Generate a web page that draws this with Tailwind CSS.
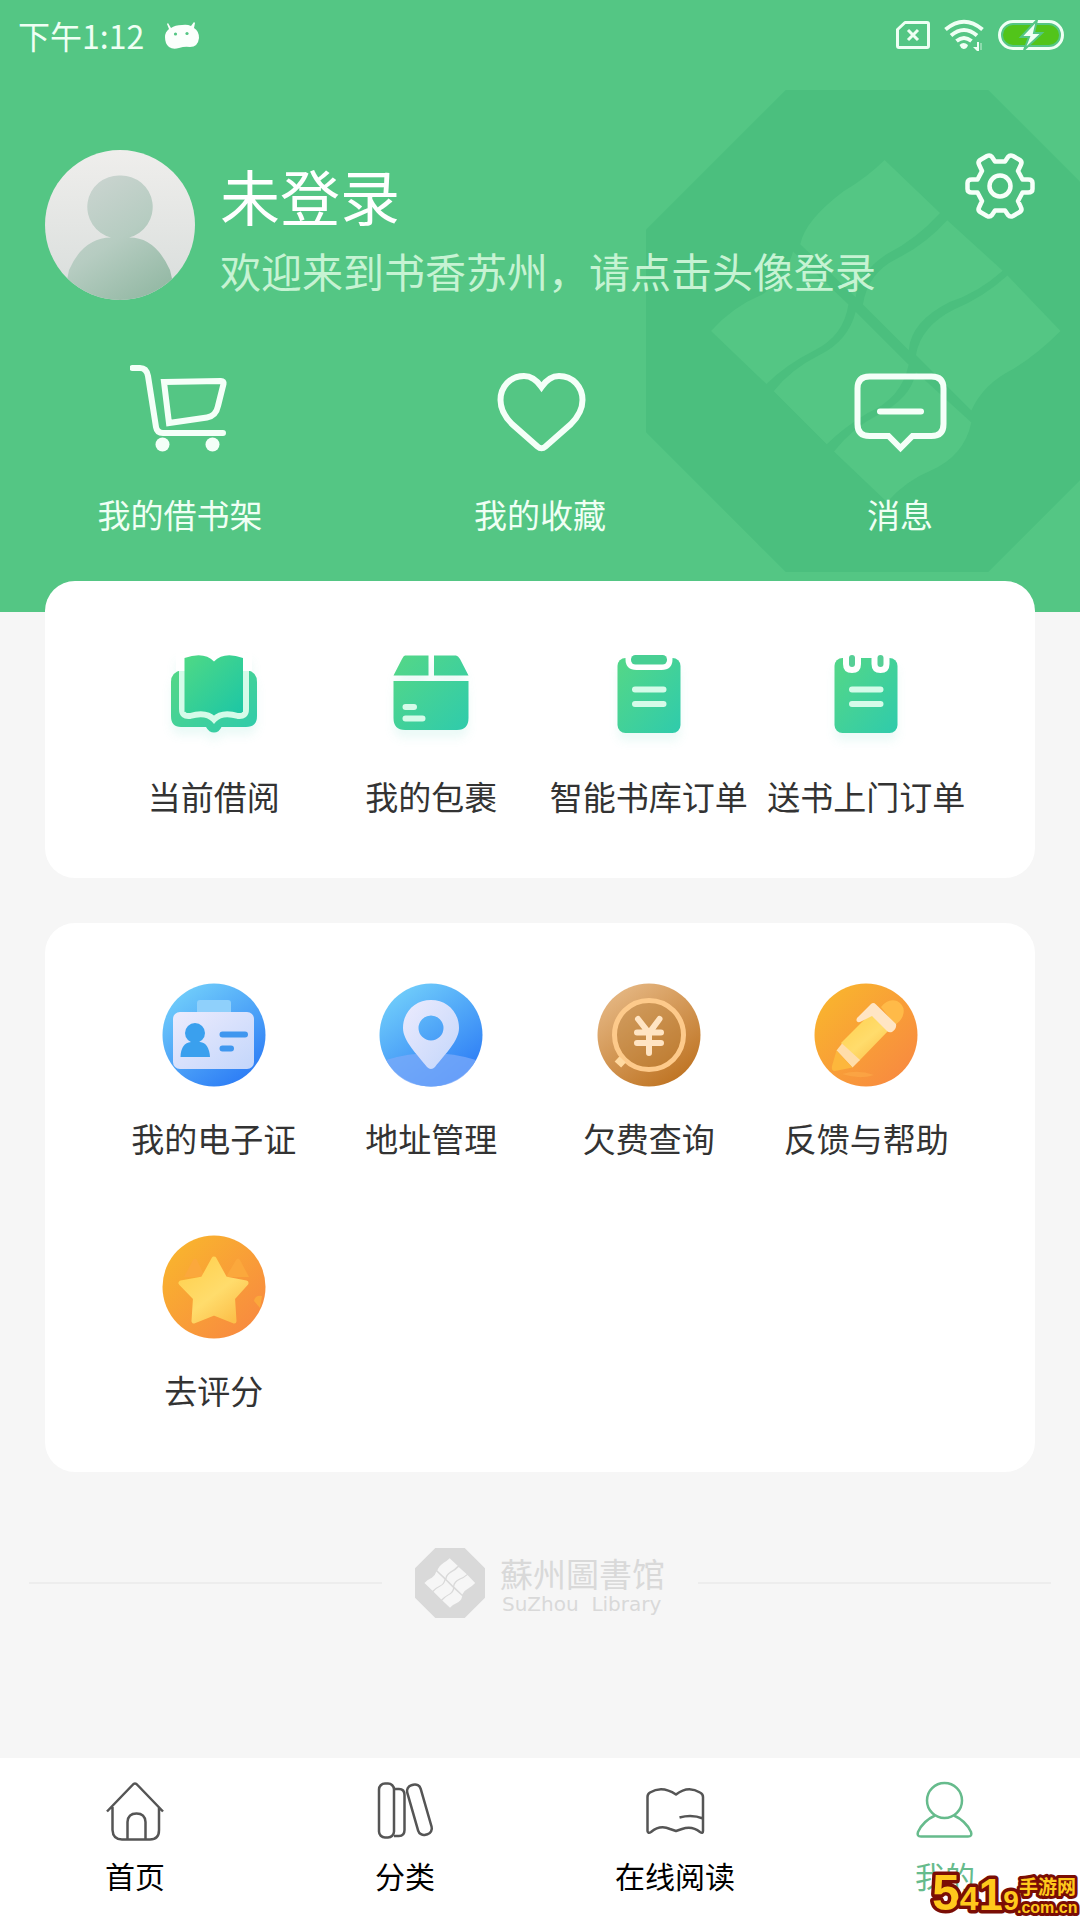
<!DOCTYPE html>
<html lang="zh-CN">
<head>
<meta charset="utf-8">
<meta name="viewport" content="width=device-width, initial-scale=1">
<title>书香苏州 - 我的</title>
<script src="https://cdn.jsdelivr.net/npm/@tailwindcss/browser@4"></script>
</head>
<body class="relative flex min-h-screen flex-col bg-[#f6f6f6] font-['Noto_Sans_CJK_SC',sans-serif] text-[#333]">

<!-- Shared gradients and the library emblem -->
<svg class="absolute size-0" aria-hidden="true">
  <defs>
    <linearGradient id="green" x1="0" y1="0" x2="1" y2="1"><stop offset=".1" stop-color="#51d68a"/><stop offset="1" stop-color="#2fcbac"/></linearGradient>
    <linearGradient id="page" x1="0" y1="0" x2="1" y2="1"><stop offset="0" stop-color="#4fd985"/><stop offset="1" stop-color="#1cc6a6"/></linearGradient>
    <linearGradient id="blue" x1=".1" y1="0" x2=".8" y2="1"><stop offset="0" stop-color="#76d4fb"/><stop offset="1" stop-color="#2a79f5"/></linearGradient>
    <linearGradient id="paper" x1="0" y1="0" x2="1" y2="1"><stop offset="0" stop-color="#ecebfd"/><stop offset="1" stop-color="#c3d6fb"/></linearGradient>
    <linearGradient id="bronze" x1=".1" y1="0" x2=".8" y2="1"><stop offset="0" stop-color="#e8bc8a"/><stop offset="1" stop-color="#bd711f"/></linearGradient>
    <linearGradient id="orange" x1=".1" y1=".1" x2=".9" y2=".9"><stop offset="0" stop-color="#f9b42e"/><stop offset="1" stop-color="#f88a40"/></linearGradient>
    <linearGradient id="gold" x1="0" y1="0" x2=".8" y2="1"><stop offset="0" stop-color="#ffcf4a"/><stop offset=".6" stop-color="#ffdc6c"/><stop offset="1" stop-color="#fcc04a"/></linearGradient>
    <linearGradient id="disc" x1="0" y1="0" x2="0" y2="1"><stop offset="0" stop-color="#efeeec"/><stop offset="1" stop-color="#d8dddb"/></linearGradient>
    <linearGradient id="person" x1=".2" y1="0" x2=".8" y2="1"><stop offset="0" stop-color="#ccd5d1"/><stop offset=".5" stop-color="#b6ccc1"/><stop offset="1" stop-color="#92b8a3"/></linearGradient>
    <symbol id="emblem" viewBox="0 0 100 100">
      <path fill="currentColor" fill-rule="evenodd" d="M29 0H71L100 29V71L71 100H29L0 71V29Z
        M32 32Q33 27 41 21Q46 18 49.500 14.500L61 25.500Q56 31 50 34Q44 38 43.500 43Z
        M62.500 27L74 37.500Q69 42 63 44Q55 48 54.500 54L45 44.500Q46 38 52 35Q58 32 62.500 27Z
        M75 38.500L86 50Q81 55 76 58Q70 61 67.500 66.500L56 55Q57 49 64 45.500Q70 43 75 38.500Z
        M30.500 33.500L42 44.500Q41 51 35 54Q29 57 25 61L13.500 50Q18 45 24 42.500Q29 39 30.500 33.500Z
        M43.500 46L54.500 57Q53 64 46 67Q41 70 37.500 73.500L26.500 62.500Q30 58 36 55Q42 52 43.500 46Z
        M56 58.500L67.500 69Q66 76 59 79Q54 81 50 85.500L39 75Q43 70 48 67.500Q55 64 56 58.500Z"/>
    </symbol>
  </defs>
</svg>

<header class="relative overflow-hidden bg-[#54c684] pb-[73px] text-white">
  <svg class="absolute top-[90px] -right-12 size-[482px] text-[#4bbf7e]" aria-hidden="true"><use href="#emblem"/></svg>

  <div class="relative flex h-[74px] items-center pr-4 pb-1 pl-[18px] text-[#effff4]">
    <time class="text-[32px] leading-[70px]">下午1:12</time>
    <svg class="ml-[21px] h-[27px] w-[34px]" viewBox="0 0 34 27" fill="#fbfffc" aria-hidden="true">
      <path d="M3 1L6 6Q10 3 17 3Q22 2 26 4L29 0L30 1L29 6Q34 9 34 16Q33 25 25 25Q20 24 14 26Q8 28 4 25Q0 22 0 15Q0 10 4 7L2 2Z"/>
      <g fill="#54c684"><circle cx="10.500" cy="12" r="1.600"/><circle cx="22" cy="11.500" r="1.600"/></g>
    </svg>
    <svg class="ml-auto h-7 w-[34px]" viewBox="0 0 34 28" fill="none" stroke="currentColor" stroke-width="3" stroke-linejoin="round" aria-hidden="true">
      <path d="M9 1.500H31Q32.500 1.500 32.500 3V25Q32.500 26.500 31 26.500H3Q1.500 26.500 1.500 25V8.500Z"/><path d="M12 9L22 19M22 9L12 19"/>
    </svg>
    <svg class="ml-3.5 h-8 w-10" viewBox="0 0 40 32" fill="none" stroke="currentColor" stroke-width="4" aria-hidden="true">
      <path d="M1.500 10.500Q20-5 38.500 10.500M7 16.500Q20 5.500 33 16.500M12.500 22Q20 16 27.500 22"/><path fill="currentColor" stroke="none" d="M15.500 26Q19.500 22 24 26Q23 30 19.500 30Q16.500 29 15.500 26ZM33 23H35V32H33L29 28H33Z"/><path stroke-width="1.500" opacity=".5" d="M37 24V31"/>
    </svg>
    <svg class="ml-3.5 h-[30px] w-[66px]" viewBox="0 0 66 30" aria-hidden="true">
      <rect x="1.500" y="1.500" width="63" height="27" rx="13.500" fill="none" stroke="currentColor" stroke-width="3"/><rect x="5" y="5" width="56" height="20" rx="10" fill="#52c41a"/><path d="M39 0L23 17H31L26 30L44 13H36Z" fill="currentColor" stroke="#54c684" stroke-width="2"/>
    </svg>
  </div>

  <div class="relative mt-[76px] flex items-start px-[45px]">
    <a href="#login" aria-label="登录" class="shrink-0">
      <svg class="size-[150px]" viewBox="0 0 150 150" aria-hidden="true">
        <clipPath id="round"><circle cx="75" cy="75" r="75"/></clipPath>
        <circle cx="75" cy="75" r="75" fill="url(#disc)"/>
        <g clip-path="url(#round)"><path fill="url(#person)" d="M75 25.500A31.500 31.500 0 0 1 84 87.500Q110 87 125 120L132 150H18L24 120Q38 88 66 87.500A31.500 31.500 0 0 1 75 25.500Z"/></g>
      </svg>
    </a>
    <div class="pt-2.5 pl-[25px]">
      <h1 class="text-[60px] leading-[70px]">未登录</h1>
      <p class="mt-2.5 text-[41px] leading-[60px] text-[#c6f3d3]">欢迎来到书香苏州，请点击头像登录</p>
    </div>
    <button type="button" aria-label="设置" class="ml-auto">
      <svg class="mt-0.5 size-[70px]" viewBox="0 0 70 70" fill="none" stroke="#f6fff9" stroke-width="4.500" stroke-linejoin="round" aria-hidden="true">
        <path d="M30 9.500H40L43 5Q45 2.500 48 4L54 7.500Q57.500 9.500 56 12.500L53 19L57.500 27.500H63Q67.500 27.500 67.500 31V37Q67.500 40.500 63 40.500H57.500L53 49L56 55.500Q57.500 58.500 54 60.500L48 64Q45 65.500 43 63L40 58.500H30L27 63Q25 65.500 22 64L16 60.500Q12.500 58.500 14 55.500L17 49L12.500 40.500H7Q2.500 40.500 2.500 37V31Q2.500 27.500 7 27.500H12.500L17 19L14 12.500Q12.500 9.500 16 7.500L22 4Q25 2.500 27 5Z"/><circle cx="35" cy="34" r="10.500"/>
      </svg>
    </button>
  </div>

  <nav aria-label="我的内容" class="relative mt-[61px] grid grid-cols-3 text-[33px] leading-[50px] text-[#effff4]">
    <a href="#shelf" class="flex flex-col items-center gap-7">
      <svg class="size-[100px]" viewBox="0 0 100 100" fill="none" stroke="#f4fff8" stroke-width="6" stroke-linecap="round" aria-hidden="true">
        <path d="M2.500 7H10Q16.500 7 18 15L26 66Q27 72 33 72H93"/><path d="M34 21L91 20Q94 20 93.500 23L88 45Q86 55 77 56.500L39 62Z"/><g fill="#f4fff8" stroke="none"><circle cx="32.500" cy="83.500" r="7"/><circle cx="82.500" cy="83.500" r="7"/></g>
      </svg>我的借书架</a>
    <a href="#favorites" class="flex flex-col items-center gap-7">
      <svg class="size-[100px]" viewBox="0 0 100 100" fill="none" stroke="#f4fff8" stroke-width="6" aria-hidden="true">
        <path d="M51.500 26C46 18 40 15 34 15C20 15 10.500 26 10.500 39C10.500 50 16 57 22 63L47.500 85.500Q51.500 89 55.500 85.500L81 63C87 57 92.500 50 92.500 39C92.500 26 83 15 69 15C63 15 57 18 51.500 26Z"/>
      </svg>我的收藏</a>
    <a href="#messages" class="flex flex-col items-center gap-7">
      <svg class="size-[100px]" viewBox="0 0 100 100" fill="none" stroke="#f4fff8" stroke-width="6" stroke-linecap="round" aria-hidden="true">
        <path d="M19.500 15.500H81.500Q93.500 15.500 93.500 27.500V63Q93.500 75 81.500 75H62.500L50.500 87L38.500 75H19.500Q7.500 75 7.500 63V27.500Q7.500 15.500 19.500 15.500Z"/><path d="M30 50.500H71"/>
      </svg>消息</a>
  </nav>
</header>

<main class="relative -mt-[31px] flex flex-1 flex-col px-[45px] text-[33px] leading-[50px]">
  <section aria-label="借阅服务" class="grid grid-cols-4 rounded-[30px] bg-white px-[60px] pt-[60px] pb-[57px]">
    <a href="#current" class="flex flex-col items-center gap-[26px] whitespace-nowrap">
      <svg class="size-[104px] drop-shadow-[0_8px_5px_#2fcbac18]" viewBox="0 0 104 104" aria-hidden="true">
        <path fill="url(#green)" d="M20 29H85Q95 31 95 41V75Q95 86 84 86H59.500Q57 91.500 52 91.500Q47 91.500 44 86H19Q9 86 9 75V41Q9 31 20 29Z"/>
        <path fill="#fff" d="M17 27H86V34H17Z"/>
        <path fill="url(#page)" stroke="#d5fbe9" stroke-width="6" d="M20 24V68Q20 76 28 75Q44 70 52 78.500Q60 70 76 75Q84 76 84 68V24"/>
        <path fill="#fff" d="M14 12H90V30H14Z"/>
        <path fill="url(#page)" d="M22.500 17Q42 10 52 20.500Q62 10 81 17V71Q62 66 52 73Q42 66 22.500 71Z"/>
      </svg>当前借阅</a>
    <a href="#packages" class="flex flex-col items-center gap-[26px] whitespace-nowrap">
      <svg class="size-[104px] drop-shadow-[0_8px_5px_#2fcbac18]" viewBox="0 0 104 104" aria-hidden="true">
        <path fill="url(#green)" d="M26 14.500H49.500V34.500H14.500L23 18Q24.500 14.500 26 14.500ZM55 14.500H77Q79 14.500 81 18L89.500 34.500H55ZM14.500 40H89.500V77Q89.500 89 78 89H26Q14.500 89 14.500 77Z"/><path stroke="#d5fbe9" stroke-width="6" stroke-linecap="round" d="M26.500 66H35M26.500 77.500H43.500"/>
      </svg>我的包裹</a>
    <a href="#smart-orders" class="flex flex-col items-center gap-[26px] whitespace-nowrap">
      <svg class="size-[104px] drop-shadow-[0_8px_5px_#2fcbac18]" viewBox="0 0 104 104" aria-hidden="true">
        <rect x="20.500" y="17" width="63" height="75" rx="8" fill="url(#green)"/><path fill="#fff" d="M28.500 12H75.500V18Q75.500 29 64.500 29H39.500Q28.500 29 28.500 18Z"/><rect x="34" y="14" width="36" height="9.500" rx="4.500" fill="#48cf93"/><path stroke="#d5fbe9" stroke-width="6" stroke-linecap="round" d="M38 48.500H66.500M38 63H66.500"/>
      </svg>智能书库订单</a>
    <a href="#door-orders" class="flex flex-col items-center gap-[26px] whitespace-nowrap">
      <svg class="size-[104px] drop-shadow-[0_8px_5px_#2fcbac18]" viewBox="0 0 104 104" aria-hidden="true">
        <rect x="20.500" y="17" width="63" height="75" rx="8" fill="url(#green)"/><path fill="#fff" d="M29 12H47V23Q47 32 38 32Q29 32 29 23ZM57.500 12H75.500V23Q75.500 32 66.500 32Q57.500 32 57.500 23Z"/><g fill="#56cf96"><rect x="35" y="14" width="6" height="12" rx="3"/><rect x="63.500" y="14" width="6" height="12" rx="3"/></g><path stroke="#d5fbe9" stroke-width="6" stroke-linecap="round" d="M38 48.500H66.500M38 63H66.500"/>
      </svg>送书上门订单</a>
  </section>

  <section aria-label="更多服务" class="mt-[45px] grid grid-cols-4 gap-y-[72px] rounded-[30px] bg-white px-[60px] pt-[60px] pb-[57px]">
    <a href="#card" class="flex flex-col items-center gap-[26px] whitespace-nowrap">
      <svg class="size-[104px]" viewBox="0 0 104 104" aria-hidden="true">
        <circle cx="52" cy="52" r="51.500" fill="url(#blue)"/><rect x="35" y="17" width="34" height="16" rx="3" fill="#8fd0fb"/><rect x="11" y="29" width="81" height="57" rx="7" fill="url(#paper)"/><g fill="#3aa0ee"><circle cx="33" cy="50" r="10"/><path d="M18.500 74Q19 60 29 59H38Q47 60 48 74Z"/></g><path stroke="#3f97ef" stroke-width="6" stroke-linecap="round" d="M60.500 51.500H83M60.500 65.500H69"/>
      </svg>我的电子证</a>
    <a href="#address" class="flex flex-col items-center gap-[26px] whitespace-nowrap">
      <svg class="size-[104px]" viewBox="0 0 104 104" aria-hidden="true">
        <circle cx="52" cy="52" r="51.500" fill="url(#blue)"/><path fill="#7ba9fa" fill-opacity=".75" d="M7 77Q52 63 97 77Q83 103.500 52 103.500Q21 103.500 7 77Z"/><path fill="url(#paper)" fill-rule="evenodd" d="M52 17C68 17 80 29 80 45C80 58 66 71 56 84Q52 88 48 84C38 71 24 58 24 45C24 29 36 17 52 17ZM52 32.500A12.500 12.500 0 1 0 52 57.500A12.500 12.500 0 1 0 52 32.500Z"/>
      </svg>地址管理</a>
    <a href="#fees" class="flex flex-col items-center gap-[26px] whitespace-nowrap">
      <svg class="size-[104px]" viewBox="0 0 104 104" fill="none" stroke-linecap="round" aria-hidden="true">
        <circle cx="52" cy="52" r="51.500" fill="url(#bronze)"/><circle cx="52" cy="52" r="34.500" fill="#b57a35" fill-opacity=".35" stroke="#fdca8b" stroke-width="5"/><path stroke="#ffe4c3" stroke-width="6" d="M41 36L52 50L62.500 36M52 50V70M40 49.500H64M40 60H64"/><path stroke="#ffd9a0" stroke-width="7" stroke-linecap="butt" d="M20 76L26.500 82"/>
      </svg>欠费查询</a>
    <a href="#help" class="flex flex-col items-center gap-[26px] whitespace-nowrap">
      <svg class="size-[104px]" viewBox="0 0 104 104" aria-hidden="true">
        <circle cx="52" cy="52" r="51.500" fill="url(#orange)"/><path fill="#ffba48" d="M67 24Q74 15 83 18Q92 23 89 32Q88 37 81 42Z"/><path fill="url(#gold)" d="M58 29L75 47L45 78L27 60Z"/><path fill="#ffe5c4" d="M57 21Q59.500 19 62 21.500L82 41Q83 46 78 49Q75 50 73 48L58 33L46 39Q41 40 43 35Z"/><path fill="#ffdda9" d="M28 60.500L46 77L38.500 84.500L22.500 67.500Z"/><path fill="#fdb73c" d="M22.500 67.500L38.500 84.500L21 88Q17 88 18 83Z"/><path fill="#fdaf4c" fill-opacity=".5" d="M28 91Q44 86 60 92Q45 97 28 91Z"/>
      </svg>反馈与帮助</a>
    <a href="#rate" class="flex flex-col items-center gap-[26px] whitespace-nowrap">
      <svg class="size-[104px]" viewBox="0 0 104 104" aria-hidden="true">
        <circle cx="52" cy="52" r="51.500" fill="url(#orange)"/><path fill="#fba83c" d="M31 25Q33 22 35 25L43 42H22ZM74 25Q76 22 78 25L87 42H64ZM92 66Q93 60 100 61L98 73Z"/><path fill="url(#gold)" stroke="url(#gold)" stroke-width="5" stroke-linejoin="round" d="M52 24L63 44L84 48L70.500 63L72 86L52 78L32 86L33.500 63L19 48L41 44Z"/>
      </svg>去评分</a>
  </section>

  <footer class="-mx-4 mt-[76px] flex items-center pb-[130px] text-[#d9d9d9]">
    <span class="h-0.5 flex-1 bg-[#ededed]"></span>
    <svg class="ml-[33px] size-[70px]" aria-hidden="true"><use href="#emblem"/></svg>
    <div class="mr-[33px] ml-[15px]">
      <p class="text-[33px] leading-[42px]">蘇州圖書馆</p>
      <p class="pl-0.5 font-['DejaVu_Sans',sans-serif] text-[20px] leading-5 whitespace-pre">SuZhou  Library</p>
    </div>
    <span class="h-0.5 flex-1 bg-[#ededed]"></span>
  </footer>
</main>

<nav aria-label="主导航" class="relative grid grid-cols-4 bg-white pt-[23px] pb-[25px] text-[30px] leading-10 text-black">
  <a href="#home" class="flex flex-col items-center gap-3.5">
    <svg class="size-[60px]" viewBox="0 0 60 60" fill="none" stroke="#555" stroke-width="2.500" aria-hidden="true"><path d="M2 30.500L27.500 4Q30 1 32.500 4L58 30.500M7.500 26V49Q8 58.500 17 58.500H45Q54 58.500 54 49V26M22.500 58V41Q23 32.500 31.500 32.500Q40 32.500 40.500 41V58"/></svg>首页</a>
  <a href="#categories" class="flex flex-col items-center gap-3.5">
    <svg class="size-[60px]" viewBox="0 0 60 60" fill="none" stroke="#555" stroke-width="2.500" aria-hidden="true"><rect x="4" y="2.500" width="15" height="54" rx="6"/><path d="M19 8H24Q29.500 8 29.500 14V49Q29.500 55 24 55H19"/><rect x="37.500" y="3" width="14" height="51.500" rx="6" transform="rotate(-16 44.300 29)"/></svg>分类</a>
  <a href="#read" class="flex flex-col items-center gap-3.5">
    <svg class="size-[60px]" viewBox="0 0 60 60" fill="none" stroke="#555" stroke-width="2.500" stroke-linejoin="round" aria-hidden="true"><path d="M31 13.500Q17 4 5 11.500Q2.500 13 2.500 16V50Q3 53 6 51Q15 43.500 25 48L31 50L37 48Q47 44.500 55 51Q58 53 58 50V16Q58 13 55 11.500Q43 4 31 13.500ZM34.500 36.500Q47 33 58 37.500"/></svg>在线阅读</a>
  <a href="#me" aria-current="page" class="flex flex-col items-center gap-3.5 text-[#66bb8c]">
    <svg class="size-[60px]" viewBox="0 0 60 60" fill="none" stroke="currentColor" stroke-width="2.500" aria-hidden="true"><circle cx="29.500" cy="19.500" r="17.500"/><path d="M20 34.500Q8 40 3 51Q1.500 55.500 6 55.500H53Q57.500 55.500 56 51Q51 40 39 34.500"/></svg>我的</a>
</nav>

<!-- Site mark laid over the corner of the page -->
<svg class="absolute right-0 bottom-0 h-[54px] w-[150px]" viewBox="0 0 150 54" fill="#ffc91c" stroke="#7a0d05" stroke-width="7" stroke-linejoin="round" paint-order="stroke" font-family="'Liberation Sans', 'Noto Sans CJK SC', sans-serif" font-weight="700">
  <text x="2" y="44" font-size="50">5<tspan font-size="34">4</tspan><tspan font-size="44">1</tspan><tspan font-size="28">9</tspan></text>
  <text x="89" y="28" font-size="19" stroke-width="6">手游网</text>
  <text x="87" y="47" font-size="16" stroke-width="6">.com.cn</text>
</svg>
</body>
</html>
